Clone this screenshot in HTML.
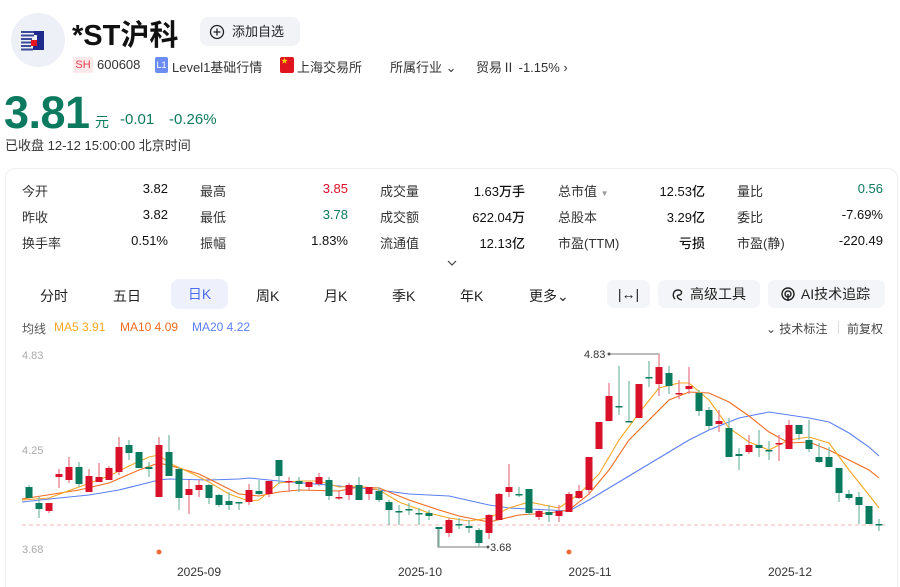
<!DOCTYPE html>
<html><head><meta charset="utf-8"><style>
*{margin:0;padding:0;box-sizing:border-box}
html,body{width:900px;height:587px;overflow:hidden}
body{background:#fff;font-family:"Liberation Sans","Noto Sans CJK SC",sans-serif;color:#222;position:relative}
.a{position:absolute;white-space:nowrap}
.st{font-size:13px;color:#333}
.v{font-size:13px;color:#111;text-align:right;font-weight:500}
.tab{font-size:14px;color:#222;top:286px}
.btn{position:absolute;top:280px;height:28px;background:#f4f5f8;border-radius:7px;font-size:14px;line-height:28px;text-align:center;color:#222}
</style></head><body>
<div class="a" style="left:11px;top:13px;width:54px;height:54px;border-radius:50%;background:#eef0f7"></div>
<svg class="a" style="left:0;top:0" width="80" height="80">
<g fill="#3d4a9a"><rect x="21" y="31" width="13" height="2"/><rect x="21" y="34.5" width="13" height="2"/><rect x="21" y="38" width="11" height="2"/><rect x="21" y="41.5" width="10" height="2"/><rect x="21" y="45" width="10" height="2"/><rect x="21" y="48.5" width="12" height="2"/></g>
<path d="M34 31h10v19h-11v-4h4v-11h-3z" fill="#1f2a8a"/>
<rect x="31" y="40" width="6" height="6" fill="#e3141f"/>
</svg>
<div class="a" style="left:72px;top:12px;font-size:29px;font-weight:bold;color:#111">*ST沪科</div>
<div class="a" style="left:200px;top:17px;width:100px;height:29px;background:#f2f3f7;border-radius:8px;font-size:13px;line-height:29px;padding-left:32px">添加自选</div>
<svg class="a" style="left:209px;top:24px" width="16" height="16"><circle cx="8" cy="8" r="6.5" fill="none" stroke="#222" stroke-width="1.3"/><path d="M8 4.5v7M4.5 8h7" stroke="#222" stroke-width="1.3"/></svg>
<div class="a" style="left:73px;top:57px;width:20px;height:16px;background:#fde8ea;color:#e0404f;font-size:11px;line-height:16px;text-align:center">SH</div>
<div class="a" style="left:97px;top:57px;font-size:13px;color:#333">600608</div>
<div class="a" style="left:155px;top:57px;width:13px;height:16px;background:#6b8cf0;color:#fff;font-size:9px;line-height:16px;text-align:center;border-radius:2px">L1</div>
<div class="a" style="left:172px;top:57px;font-size:13px;color:#333">Level1基础行情</div>
<div class="a" style="left:280px;top:57px;width:14px;height:16px;background:#e0141e;border-radius:2px;color:#ffd400;font-size:7px;line-height:10px;padding-left:1px">★</div>
<div class="a" style="left:297px;top:57px;font-size:13px;color:#333">上海交易所</div>
<div class="a" style="left:390px;top:57px;font-size:13px;color:#333">所属行业 ⌄</div>
<div class="a" style="left:476px;top:57px;font-size:13px;color:#333">贸易Ⅱ -1.15% ›</div>
<div class="a" style="left:4px;top:87px;font-size:45px;font-weight:bold;color:#0b7a5e;letter-spacing:-0.5px">3.81</div>
<div class="a" style="left:95px;top:112px;font-size:14px;color:#0b7a5e">元</div>
<div class="a" style="left:120px;top:111px;font-size:15px;color:#0b7a5e">-0.01</div>
<div class="a" style="left:169px;top:111px;font-size:15px;color:#0b7a5e">-0.26%</div>
<div class="a" style="left:5px;top:135px;font-size:13px;color:#333">已收盘 12-12 15:00:00 北京时间</div>
<div class="a" style="left:5px;top:168px;width:893px;height:419px;border:1px solid #eceef2;border-bottom:none;border-radius:10px 10px 0 0"></div>

<div class="a st" style="left:22px;top:181px">今开</div><div class="a v" style="right:732px;top:181px">3.82</div>
<div class="a st" style="left:200px;top:181px">最高</div><div class="a v" style="right:552px;top:181px;color:#d9102a">3.85</div>
<div class="a st" style="left:380px;top:181px">成交量</div><div class="a v" style="right:375px;top:181px">1.63万手</div>
<div class="a st" style="left:558px;top:181px">总市值 <span style="font-size:8px;color:#999">▼</span></div><div class="a v" style="right:195px;top:181px">12.53亿</div>
<div class="a st" style="left:737px;top:181px">量比</div><div class="a v" style="right:17px;top:181px;color:#0b7a5e">0.56</div>

<div class="a st" style="left:22px;top:207px">昨收</div><div class="a v" style="right:732px;top:207px">3.82</div>
<div class="a st" style="left:200px;top:207px">最低</div><div class="a v" style="right:552px;top:207px;color:#0b7a5e">3.78</div>
<div class="a st" style="left:380px;top:207px">成交额</div><div class="a v" style="right:375px;top:207px">622.04万</div>
<div class="a st" style="left:558px;top:207px">总股本</div><div class="a v" style="right:195px;top:207px">3.29亿</div>
<div class="a st" style="left:737px;top:207px">委比</div><div class="a v" style="right:17px;top:207px">-7.69%</div>

<div class="a st" style="left:22px;top:233px">换手率</div><div class="a v" style="right:732px;top:233px">0.51%</div>
<div class="a st" style="left:200px;top:233px">振幅</div><div class="a v" style="right:552px;top:233px">1.83%</div>
<div class="a st" style="left:380px;top:233px">流通值</div><div class="a v" style="right:375px;top:233px">12.13亿</div>
<div class="a st" style="left:558px;top:233px">市盈(TTM)</div><div class="a v" style="right:195px;top:233px">亏损</div>
<div class="a st" style="left:737px;top:233px">市盈(静)</div><div class="a v" style="right:17px;top:233px">-220.49</div>
<svg class="a" style="left:446px;top:259px" width="12" height="8"><path d="M2 2l4 4 4-4" fill="none" stroke="#444" stroke-width="1.2"/></svg>

<div class="a tab" style="left:40px">分时</div>
<div class="a tab" style="left:113px">五日</div>
<div class="a" style="left:171px;top:279px;width:57px;height:30px;background:#eef1fb;border-radius:8px;color:#4a6cf0;font-size:14px;line-height:30px;text-align:center">日K</div>
<div class="a tab" style="left:256px">周K</div>
<div class="a tab" style="left:324px">月K</div>
<div class="a tab" style="left:392px">季K</div>
<div class="a tab" style="left:460px">年K</div>
<div class="a tab" style="left:529px">更多⌄</div>
<div class="btn" style="left:607px;width:43px">|↔|</div>
<div class="btn" style="left:658px;width:102px;padding-left:18px">高级工具</div>
<svg class="a" style="left:670px;top:286px" width="16" height="16"><path d="M5 13c-3-3-2-9 3-9s4 5 1 5-2 4 3 5" fill="none" stroke="#222" stroke-width="1.4"/></svg>
<div class="btn" style="left:768px;width:117px;padding-left:18px">AI技术追踪</div>
<svg class="a" style="left:780px;top:286px" width="16" height="16"><circle cx="8" cy="8" r="6" fill="none" stroke="#222" stroke-width="1.4"/><circle cx="8" cy="8" r="3" fill="none" stroke="#222" stroke-width="1.4"/><path d="M8 8v7" stroke="#222" stroke-width="1.4"/></svg>

<div class="a" style="left:22px;top:320px;font-size:12px;color:#555">均线</div>
<div class="a" style="left:54px;top:320px;font-size:12px;color:#f5a623">MA5 3.91</div>
<div class="a" style="left:120px;top:320px;font-size:12px;color:#f06b1e">MA10 4.09</div>
<div class="a" style="left:192px;top:320px;font-size:12px;color:#5b7ff5">MA20 4.22</div>
<div class="a" style="left:766px;top:320px;font-size:12px;color:#444">⌄ 技术标注</div>
<div class="a" style="left:838px;top:321px;width:1px;height:13px;background:#ddd"></div>
<div class="a" style="left:847px;top:320px;font-size:12px;color:#444">前复权</div>

<svg class="a" style="left:0;top:0" width="900" height="587">
<g font-size="11" fill="#aaa" font-family="Liberation Sans,sans-serif"><text x="22" y="359">4.83</text><text x="22" y="454">4.25</text><text x="22" y="553">3.68</text></g>
<g font-size="12" fill="#333" font-family="Liberation Sans,sans-serif" text-anchor="middle"><text x="199" y="576">2025-09</text><text x="420" y="576">2025-10</text><text x="590" y="576">2025-11</text><text x="790" y="576">2025-12</text></g>
<line x1="22" y1="525" x2="885" y2="525" stroke="#f4b6b6" stroke-dasharray="4 3"/>
<circle cx="159" cy="552" r="2.5" fill="#f26b3a"/><circle cx="569" cy="552" r="2.5" fill="#f26b3a"/>
<path d="M609 354H659V367M438 527V547H488" fill="none" stroke="#777"/>
<circle cx="609" cy="354" r="1.5" fill="#555"/><circle cx="488" cy="547" r="1.5" fill="#555"/>
<g font-size="11" fill="#333" font-family="Liberation Sans,sans-serif"><text x="584" y="358">4.83</text><text x="490" y="551">3.68</text></g>
<g fill="none" stroke-width="1.1">
<polyline stroke="#5b7ff5" points="22,502 59,498 89,495 119,490 139,485 159,480 169,479 209,480 239,479 249,478 279,481 339,486 379,490 409,494 449,496 489,505 509,508 549,510 569,511 589,500 609,488 639,470 669,452 689,440 709,430 739,418 769,412 789,415 809,418 829,422 849,433 869,447 879,456"/>
<polyline stroke="#f06b1e" points="22,499 79,490 109,483 139,470 159,463 179,468 199,474 219,484 239,494 259,496 279,492 299,490 339,491 359,487 379,488 409,500 439,510 459,516 489,522 519,515 549,513 569,510 589,494 609,470 629,440 649,420 669,400 689,392 709,393 729,402 749,416 769,432 789,443 809,442 829,450 849,460 869,470 879,478"/>
<polyline stroke="#f5a623" points="22,500 49,498 79,487 109,476 129,466 149,457 159,455 169,463 189,472 209,482 229,494 249,501 259,500 279,483 299,481 319,481 339,487 359,486 379,490 399,502 429,513 449,518 469,521 489,518 509,508 529,502 559,508 579,494 599,474 619,440 639,413 659,388 679,383 689,383 709,400 729,428 749,442 769,450 789,440 809,437 829,443 849,470 869,495 879,508"/>
</g>
<path stroke="#e8808c" stroke-width="1.3" fill="none" d="M49 503V513M59 469V488M69 457V483M89 469V492M99 463V482M109 466V480M119 437V475M159 437V497M189 480V514M199 480V497M249 484V505M269 481V497M289 477V492M309 482V490M319 473V486M339 490V500M349 483V500M369 487V500M449 518V537M489 514V539M499 493V520M509 464V497M539 510V520M559 505V522M569 492V512M579 485V499M589 457V495M599 422V449M609 383V421M639 384V418M659 354V396M679 380V399M689 367V394M719 410V432M749 435V454M779 435V461M789 420V449"/>
<path stroke="#7fbcaa" stroke-width="1.3" fill="none" d="M29 485V498M39 497V518M79 462V487M129 440V460M139 452V468M149 462V477M169 435V476M179 467V510M209 484V504M219 494V507M229 492V510M239 502V510M259 480V495M279 460V484M299 477V492M329 477V500M359 477V500M379 487V502M389 500V525M399 505V525M409 503V515M419 508V525M429 510V520M439 527V547M459 518V529M469 520V533M479 528V547M519 487V497M529 489V515M549 505V522M619 366V415M629 381V422M649 361V387M669 366V394M699 390V416M709 407V430M729 418V457M739 448V470M759 430V457M769 441V460M799 425V440M809 420V452M819 443V463M829 447V467M839 468V502M849 490V500M859 492V524M869 506V524M879 519V531"/>
<g fill="#d9102a">
<rect x="45.5" y="503" width="7" height="8"/><rect x="55.5" y="474" width="7" height="3"/><rect x="65.5" y="467" width="7" height="13"/><rect x="85.5" y="476" width="7" height="16"/><rect x="95.5" y="477" width="7" height="5"/><rect x="105.5" y="468" width="7" height="12"/><rect x="115.5" y="447" width="7" height="25"/><rect x="155.5" y="445" width="7" height="52"/><rect x="185.5" y="489" width="7" height="6"/><rect x="195.5" y="485" width="7" height="5"/><rect x="245.5" y="490" width="7" height="12"/><rect x="265.5" y="481" width="7" height="13"/><rect x="285.5" y="481" width="7" height="1.5"/><rect x="305.5" y="482" width="7" height="5"/><rect x="315.5" y="477" width="7" height="7"/><rect x="335.5" y="497" width="7" height="1.5"/><rect x="345.5" y="485" width="7" height="10"/><rect x="365.5" y="487" width="7" height="7"/><rect x="445.5" y="520" width="7" height="13"/><rect x="485.5" y="515" width="7" height="18"/><rect x="495.5" y="494" width="7" height="26"/><rect x="505.5" y="487" width="7" height="5"/><rect x="535.5" y="511" width="7" height="6"/><rect x="555.5" y="511" width="7" height="5"/><rect x="565.5" y="494" width="7" height="18"/><rect x="575.5" y="491" width="7" height="7"/><rect x="585.5" y="457" width="7" height="33"/><rect x="595.5" y="422" width="7" height="27"/><rect x="605.5" y="396" width="7" height="25"/><rect x="635.5" y="384" width="7" height="34"/><rect x="655.5" y="367" width="7" height="17"/><rect x="675.5" y="393" width="7" height="1.5"/><rect x="685.5" y="386" width="7" height="3"/><rect x="715.5" y="421" width="7" height="3"/><rect x="745.5" y="445" width="7" height="7"/><rect x="775.5" y="443" width="7" height="1.5"/><rect x="785.5" y="425" width="7" height="24"/>
</g>
<g fill="#0a7a5f">
<rect x="25.5" y="487" width="7" height="11"/><rect x="35.5" y="503" width="7" height="6"/><rect x="75.5" y="467" width="7" height="17"/><rect x="125.5" y="445" width="7" height="8"/><rect x="135.5" y="452" width="7" height="16"/><rect x="145.5" y="467" width="7" height="2"/><rect x="165.5" y="452" width="7" height="24"/><rect x="175.5" y="469" width="7" height="29"/><rect x="205.5" y="485" width="7" height="13"/><rect x="215.5" y="495" width="7" height="10"/><rect x="225.5" y="501" width="7" height="4"/><rect x="235.5" y="502" width="7" height="1.5"/><rect x="255.5" y="491" width="7" height="3"/><rect x="275.5" y="460" width="7" height="16"/><rect x="295.5" y="481" width="7" height="3"/><rect x="325.5" y="480" width="7" height="16"/><rect x="355.5" y="485" width="7" height="15"/><rect x="375.5" y="491" width="7" height="9"/><rect x="385.5" y="502" width="7" height="8"/><rect x="395.5" y="511" width="7" height="1.5"/><rect x="405.5" y="509" width="7" height="1.5"/><rect x="415.5" y="513" width="7" height="1.5"/><rect x="425.5" y="513" width="7" height="3"/><rect x="435.5" y="527" width="7" height="2"/><rect x="455.5" y="524" width="7" height="1.5"/><rect x="465.5" y="526" width="7" height="2"/><rect x="475.5" y="530" width="7" height="13"/><rect x="515.5" y="494" width="7" height="1.5"/><rect x="525.5" y="489" width="7" height="24"/><rect x="545.5" y="512" width="7" height="3"/><rect x="615.5" y="406" width="7" height="1.5"/><rect x="625.5" y="421" width="7" height="1.5"/><rect x="645.5" y="377" width="7" height="1.5"/><rect x="665.5" y="373" width="7" height="13"/><rect x="695.5" y="393" width="7" height="18"/><rect x="705.5" y="410" width="7" height="16"/><rect x="725.5" y="428" width="7" height="29"/><rect x="735.5" y="454" width="7" height="2"/><rect x="755.5" y="445" width="7" height="3"/><rect x="765.5" y="450" width="7" height="1.5"/><rect x="795.5" y="425" width="7" height="9"/><rect x="805.5" y="440" width="7" height="9"/><rect x="815.5" y="457" width="7" height="5"/><rect x="825.5" y="457" width="7" height="10"/><rect x="835.5" y="468" width="7" height="25"/><rect x="845.5" y="494" width="7" height="4"/><rect x="855.5" y="497" width="7" height="8"/><rect x="865.5" y="506" width="7" height="18"/><rect x="875.5" y="524" width="7" height="1.5"/>
</g>
</svg>
</body></html>
